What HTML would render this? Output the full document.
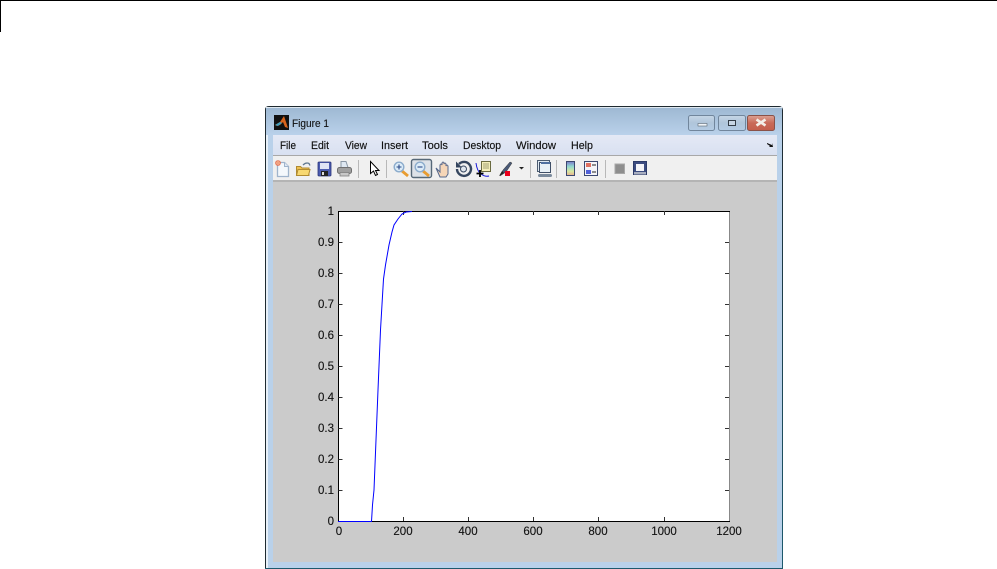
<!DOCTYPE html>
<html><head><meta charset="utf-8"><style>
html,body{margin:0;padding:0;background:#fff;width:997px;height:569px;overflow:hidden}
svg{display:block}
.m{font:11px "Liberation Sans",sans-serif;fill:#111;stroke:#111;stroke-width:.15px}
.t{font:11.5px "Liberation Sans",sans-serif;fill:#111;stroke:#111;stroke-width:.12px}
</style></head><body>
<svg width="997" height="569" viewBox="0 0 997 569" xmlns="http://www.w3.org/2000/svg">
<defs>
<linearGradient id="tb" x1="0" y1="0" x2="0" y2="1"><stop offset="0" stop-color="#9db8d2"/><stop offset="1" stop-color="#b9d1ea"/></linearGradient>
<linearGradient id="mn" x1="0" y1="0" x2="0" y2="1"><stop offset="0" stop-color="#e4e9f5"/><stop offset="1" stop-color="#d8e0f1"/></linearGradient>
<linearGradient id="btn" x1="0" y1="0" x2="0" y2="1"><stop offset="0" stop-color="#c6d6e6"/><stop offset=".5" stop-color="#afc5da"/><stop offset="1" stop-color="#b4cce4"/></linearGradient>
<linearGradient id="cl" x1="0" y1="0" x2="0" y2="1"><stop offset="0" stop-color="#dca294"/><stop offset=".5" stop-color="#c96a58"/><stop offset="1" stop-color="#c45f4c"/></linearGradient>
<linearGradient id="rb" x1="0" y1="0" x2="0" y2="1"><stop offset="0" stop-color="#7a7ac8"/><stop offset=".35" stop-color="#90d8d0"/><stop offset=".7" stop-color="#d8e8a0"/><stop offset="1" stop-color="#e8b090"/></linearGradient>
<linearGradient id="edge" x1="0" y1="0" x2="0" y2="1"><stop offset="0" stop-color="#1f2a30"/><stop offset="1" stop-color="#1d5a6e"/></linearGradient>
</defs>
<!-- page rule -->
<rect x="0" y="0" width="997" height="1" fill="#000"/>
<rect x="0" y="0" width="1" height="32" fill="#000"/>
<!-- window -->
<path d="M265 569V110q0-4 4-4H779q4 0 4 4V569Z" fill="#b9d1ea"/>
<path d="M265.500 569V110q0-3.500 3.500-3.500H779q3 0 3.500 3.500" fill="none" stroke="#1f2a30"/>
<rect x="782" y="110" width="1" height="459" fill="url(#edge)"/>
<rect x="265" y="568" width="518" height="1" fill="#1d5a6e"/>
<rect x="266" y="107" width="516" height="28" fill="url(#tb)"/>
<rect x="266" y="107" width="516" height="1" fill="#dfe8f0"/>
<rect x="266" y="135" width="7" height="433" fill="#b9d1ea"/>
<rect x="777" y="135" width="5" height="433" fill="#b9d1ea"/>
<rect x="266" y="135" width="2" height="433" fill="#e8f0f8"/>
<!-- logo -->
<rect x="274" y="115" width="15" height="15" fill="#111"/>
<path d="M275 125l5-3 4-6 4 12-3-1-2-5-3 3-3 1z" fill="#d8641c"/>
<path d="M275 125l5-3 2 1-4 3z" fill="#3f9fc0"/>
<text x="292" y="127" style="font:11px 'Liberation Sans',sans-serif" fill="#111" stroke="#111" stroke-width=".12" textLength="37" lengthAdjust="spacingAndGlyphs">Figure 1</text>
<!-- caption buttons -->
<rect x="688.500" y="115.500" width="26" height="15" rx="2" fill="url(#btn)" stroke="#71869c"/>
<rect x="698" y="123.500" width="9" height="2.500" fill="#f0f4f8" stroke="#5a6672" stroke-width=".6"/>
<rect x="718.500" y="115.500" width="27" height="15" rx="2" fill="url(#btn)" stroke="#71869c"/>
<rect x="728.500" y="120.500" width="7" height="5" fill="#c8d6e4" stroke="#333c46" stroke-width="1"/>
<rect x="747.500" y="115.500" width="27" height="15" rx="2" fill="url(#cl)" stroke="#8a5248"/>
<path d="M756.500 119.500l9 6M765.500 119.500l-9 6" stroke="#f4efe8" stroke-width="2.600"/>
<!-- menu -->
<rect x="273" y="135" width="504" height="21" fill="url(#mn)"/>
<rect x="273" y="155" width="504" height="1" fill="#a8a8a8"/>
<text class="m" x="280" y="149" textLength="16" lengthAdjust="spacingAndGlyphs">File</text>
<text class="m" x="311" y="149" textLength="18" lengthAdjust="spacingAndGlyphs">Edit</text>
<text class="m" x="345" y="149" textLength="22" lengthAdjust="spacingAndGlyphs">View</text>
<text class="m" x="381" y="149" textLength="27" lengthAdjust="spacingAndGlyphs">Insert</text>
<text class="m" x="422" y="149" textLength="26" lengthAdjust="spacingAndGlyphs">Tools</text>
<text class="m" x="463" y="149" textLength="38" lengthAdjust="spacingAndGlyphs">Desktop</text>
<text class="m" x="516" y="149" textLength="40" lengthAdjust="spacingAndGlyphs">Window</text>
<text class="m" x="571" y="149" textLength="22" lengthAdjust="spacingAndGlyphs">Help</text>
<path d="M767 143l5 2v-2l1 4h-4l1-1-3-2z" fill="#111"/>
<!-- toolbar -->
<rect x="273" y="156" width="504" height="24" fill="#f0f0f0"/>
<rect x="273" y="180" width="504" height="2" fill="#b4b4b4"/>
<!-- seps -->
<rect x="358" y="160" width="1" height="18" fill="#b8b8b8"/>
<rect x="386" y="160" width="1" height="18" fill="#b8b8b8"/>
<rect x="530" y="160" width="1" height="18" fill="#b8b8b8"/>
<rect x="556" y="160" width="1" height="18" fill="#b8b8b8"/>
<rect x="605" y="160" width="1" height="18" fill="#b8b8b8"/>
<!-- new -->
<path d="M277.500 162.500h7l4 4v10h-11z" fill="#f4f8fc" stroke="#9fb4cc" stroke-width="1.300"/>
<path d="M284.500 162.500v4h4" fill="#dfe8f4" stroke="#9fb4cc"/>
<circle cx="278" cy="163" r="2.500" fill="#f0a080" stroke="#e06040" stroke-width=".6"/>
<!-- open -->
<path d="M296.500 175.500v-9h4l1.500 1.500h7v7.500z" fill="#eec050" stroke="#b08a30"/>
<path d="M296.500 175.500l1.500-6h12l-1.500 6z" fill="#f8d870" stroke="#b08a30"/>
<path d="M303 165q3-3 6-1.500l1 2" fill="none" stroke="#607890" stroke-width="1.300"/>
<!-- save -->
<rect x="318" y="162" width="13" height="14" rx="1" fill="#4c5cb0" stroke="#2a3478" stroke-width=".8"/>
<rect x="320" y="163" width="9" height="6" fill="#dfe4f4"/>
<rect x="321" y="171" width="7" height="5" fill="#222"/>
<rect x="322" y="172" width="2" height="3" fill="#ddd"/>
<!-- print -->
<path d="M341 161.500h5l2 6h-7z" fill="#dfe8f2" stroke="#8a97a5"/>
<rect x="337.500" y="167.500" width="14" height="6" rx="2" fill="#a0a0a0" stroke="#707070"/>
<rect x="340" y="172.500" width="9" height="3.500" fill="#c8c8c8" stroke="#808080" stroke-width=".8"/>
<!-- arrow -->
<path d="M370.500 161.500v12l3-2.500 2 4.500 2-1-2-4h3.500z" fill="#fff" stroke="#000"/>
<!-- zoom in -->
<path d="M402 171l6 5" stroke="#e89c30" stroke-width="2.800"/>
<circle cx="399" cy="167" r="4.800" fill="#dcecf8" stroke="#8caccc" stroke-width="1.400"/>
<path d="M396.500 167h5M399 164.500v5" stroke="#2a4a88" stroke-width="1.100"/>
<!-- zoom out active -->
<rect x="411.500" y="159.500" width="20" height="18" rx="2" fill="#dde2e8" stroke="#566878" stroke-width="1.400"/>
<path d="M423 171l6 5" stroke="#e89c30" stroke-width="2.800"/>
<circle cx="420" cy="167" r="4.800" fill="#dcecf8" stroke="#8caccc" stroke-width="1.400"/>
<path d="M417.500 167h5" stroke="#2a4a88" stroke-width="1.100"/>
<!-- pan -->
<path d="M436 168l4 4v-7q1-2 2 0v-2q1-2 2 0v1q1-2 2 0v2q1-2 2 0v8l-2 3h-6z" fill="#f6d6b8" stroke="#56688c" stroke-width="1"/>
<!-- rotate -->
<path d="M459 164a7 7 0 1 1-2 5" fill="none" stroke="#35465f" stroke-width="2.400"/>
<path d="M456 161.500v6h6z" fill="#35465f"/>
<circle cx="463.500" cy="169" r="3" fill="#dfe6ee" stroke="#35465f"/>
<!-- data cursor -->
<rect x="481.500" y="161.500" width="9" height="10" fill="#f4eeb8" stroke="#6a6a40"/>
<path d="M483 164h6M483 166h6M483 168h6" stroke="#8a8a60" stroke-width=".7"/>
<path d="M476 163q1 8 5 11 4 3 8 2" fill="none" stroke="#1818d8"/>
<path d="M480 170v7M476.500 173.500h7" stroke="#000" stroke-width="1.800"/>
<!-- brush -->
<path d="M500 176l3-6 7-8 2 1-6 9z" fill="#4a5a78" stroke="#333" stroke-width=".5"/>
<path d="M499 176l3-5 2 2z" fill="#222"/>
<rect x="505" y="171" width="5" height="5" fill="#e8001c"/>
<path d="M519 167h5l-2.500 2.500z" fill="#222"/>
<!-- link plot -->
<rect x="537.500" y="160.500" width="12" height="11" fill="#dfe8f0" stroke="#4c5c70"/>
<rect x="539.500" y="162.500" width="11" height="10" fill="#e8f0f6" stroke="#3e4e66"/>
<rect x="541" y="162" width="9" height="2" fill="#5070a0"/>
<path d="M539.500 175.500h11" stroke="#7a8a9c" stroke-width="3" stroke-linecap="round"/>
<!-- colorbar -->
<rect x="566.500" y="161.500" width="8" height="14" fill="url(#rb)" stroke="#3c4870"/>
<!-- legend -->
<rect x="584.500" y="161.500" width="13" height="14" fill="#f4f4f8" stroke="#3c4870"/>
<rect x="586" y="163" width="5" height="4" fill="#e07060"/>
<rect x="586" y="170" width="5" height="4" fill="#5060d8"/>
<path d="M592 165h4M592 172h4" stroke="#222" stroke-width="1"/>
<!-- hide tools -->
<rect x="615" y="164" width="9.500" height="9.500" fill="#8e8e8e" stroke="#a8a8a8"/>
<!-- show tools -->
<rect x="633.500" y="161.500" width="13" height="13" fill="#3c4c80" stroke="#2c3a68"/>
<rect x="636" y="164" width="8" height="7" fill="#f4f4f8"/>
<rect x="634" y="172" width="12" height="2.500" fill="#a8aec0"/>
<!-- figure area -->
<rect x="273" y="182" width="504" height="380" fill="#cbcbcb"/>
<!-- axes -->
<rect x="338" y="211" width="391" height="310" fill="#fff"/>
<path d="M338.500 211.500H730M338.500 211v310.500H730" fill="none" stroke="#000"/>
<path d="M729.500 212v309" stroke="#888" fill="none"/>
<!-- ticks -->
<path d="M338.500 490.500h4M338.500 459.500h4M338.500 428.500h4M338.500 397.500h4M338.500 366.500h4M338.500 335.500h4M338.500 304.500h4M338.500 273.500h4M338.500 242.500h4" stroke="#333"/>
<path d="M729 490.500h-4M729 459.500h-4M729 428.500h-4M729 397.500h-4M729 366.500h-4M729 335.500h-4M729 304.500h-4M729 273.500h-4M729 242.500h-4" stroke="#333"/>
<path d="M403.500 521v-4M468.500 521v-4M533.500 521v-4M598.500 521v-4M664.500 521v-4" stroke="#333"/>
<path d="M403.500 211v4M468.500 211v4M533.500 211v4M598.500 211v4M664.500 211v4" stroke="#333"/>
<!-- curve -->
<polyline fill="none" stroke="#0000ff" points="338,521.500 371.500,521.500 372.500,505 374,490 376,440 378,390 380.500,330 383.500,279 385.500,265 389,245 392,232 394,225 398,219 402,214 406,212 412,211.500"/>
<!-- y labels -->
<g text-anchor="end">
<text class="t" x="334" y="525">0</text>
<text class="t" x="334" y="494">0.1</text>
<text class="t" x="334" y="463">0.2</text>
<text class="t" x="334" y="432">0.3</text>
<text class="t" x="334" y="401">0.4</text>
<text class="t" x="334" y="370">0.5</text>
<text class="t" x="334" y="339">0.6</text>
<text class="t" x="334" y="308">0.7</text>
<text class="t" x="334" y="277">0.8</text>
<text class="t" x="334" y="246">0.9</text>
<text class="t" x="334" y="215">1</text>
</g>
<g text-anchor="middle">
<text class="t" x="339" y="535">0</text>
<text class="t" x="403" y="535">200</text>
<text class="t" x="468" y="535">400</text>
<text class="t" x="533" y="535">600</text>
<text class="t" x="598" y="535">800</text>
<text class="t" x="664" y="535">1000</text>
<text class="t" x="729" y="535">1200</text>
</g>
</svg>
</body></html>
